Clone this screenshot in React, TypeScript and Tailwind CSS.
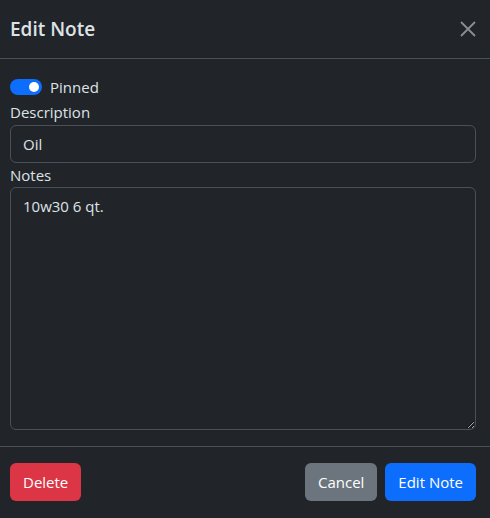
export default function App() {
  return (
    <div
      className="w-[490px] h-[518px] bg-[#212529] text-[#dee2e6] flex flex-col overflow-hidden"
      style={{ fontFamily: '"Open Sans", "Noto Sans", sans-serif' }}
    >
      {/* header */}
      <div className="h-[59px] flex items-center justify-between pl-[10px] pr-[14px] border-b border-[#495057] shrink-0">
        <h1 className="text-[19px] font-semibold text-[#dee2e6] leading-none">Edit Note</h1>
        <svg width="16" height="16" viewBox="0 0 16 16" className="text-[#8b8e91]">
          <path d="M1 1 L15 15 M15 1 L1 15" stroke="currentColor" strokeWidth="1.8" fill="none" />
        </svg>
      </div>

      {/* body */}
      <div className="flex-1 flex flex-col pl-[10px] pr-[14px] pt-[19px] pb-[16px] text-[15px]">
        <div className="flex items-center gap-2 h-[18px]">
          <div className="w-[32px] h-[16px] rounded-full bg-[#0d6efd] flex items-center justify-end pr-[3px]">
            <div className="w-[10px] h-[10px] rounded-full bg-white" />
          </div>
          <span>Pinned</span>
        </div>
        <label className="mt-[5px] leading-[22px]">Description</label>
        <input
          readOnly
          value="Oil"
          className="mt-[2px] h-[38px] w-full rounded-[6px] border border-[#495057] bg-[#212529] px-[12px] text-[15px] text-[#dee2e6] outline-none"
          style={{ fontFamily: 'inherit' }}
        />
        <label className="mt-[1px] leading-[22px]">Notes</label>
        <textarea
          readOnly
          value="10w30 6 qt."
          className="mt-[1px] flex-1 w-full rounded-[6px] border border-[#495057] bg-[#212529] px-[12px] pt-[7px] pb-[10px] text-[15px] text-[#dee2e6] outline-none resize-y"
          style={{ fontFamily: 'inherit' }}
        />
      </div>

      {/* footer */}
      <div className="h-[72px] shrink-0 border-t border-[#495057] flex items-start justify-between pl-[10px] pr-[14px] pt-[16px] text-[15px]">
        <button className="h-[38px] px-[13px] rounded-[6px] bg-[#dc3545] text-white">Delete</button>
        <div className="flex gap-2">
          <button className="h-[38px] px-[13px] rounded-[6px] bg-[#6c757d] text-white">Cancel</button>
          <button className="h-[38px] px-[13px] rounded-[6px] bg-[#0d6efd] text-white">Edit Note</button>
        </div>
      </div>
    </div>
  )
}
